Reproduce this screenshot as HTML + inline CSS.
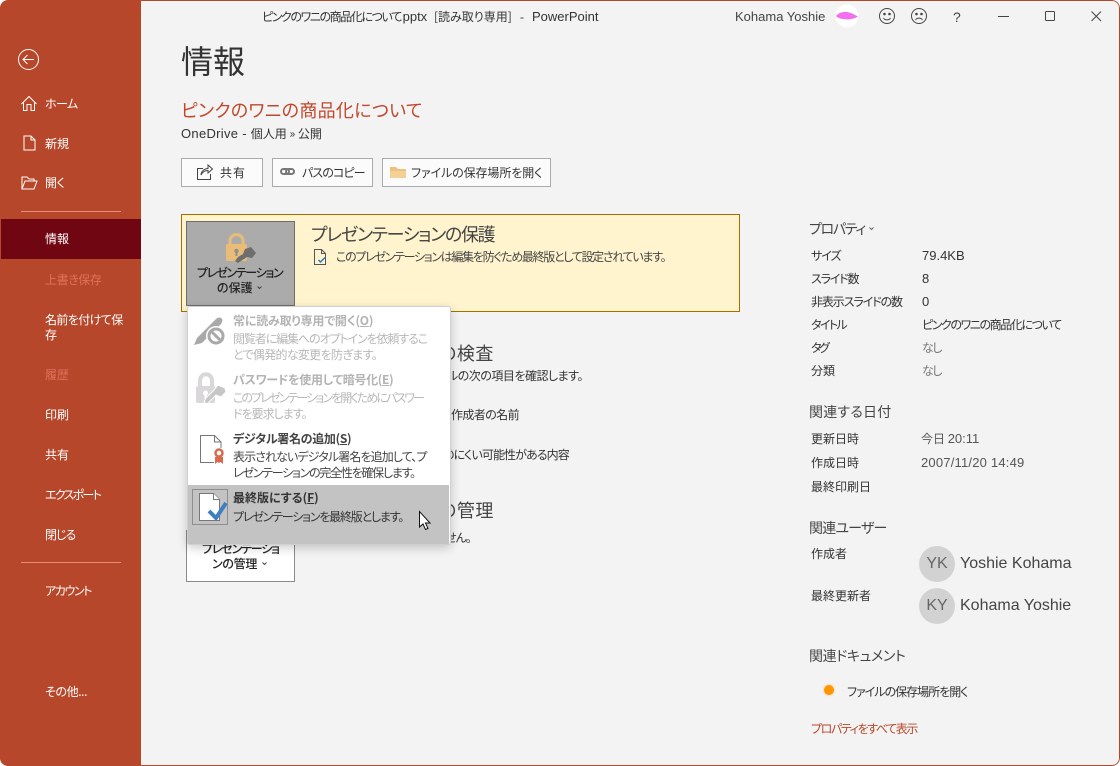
<!DOCTYPE html>
<html lang="ja"><head><meta charset="utf-8"><title>情報</title>
<style>
html,body{margin:0;padding:0;background:#fff}
#w{position:relative;width:1120px;height:766px;overflow:hidden;background:#f3f3f3;border-radius:8px;font-family:"Liberation Sans","Noto Sans CJK JP",sans-serif;color:#333}
.t{position:absolute;white-space:nowrap;font-size:12px;line-height:20px;height:20px;font-family:"Noto Sans CJK JP","Liberation Sans",sans-serif;font-feature-settings:"palt";color:#333}
.l{font-family:"Liberation Sans","Noto Sans CJK JP",sans-serif}
.s{color:#fff}.d{color:#e0705a}
.h{font-size:14px;color:#444}
.b{position:absolute;box-sizing:border-box;border:1px solid #ababab;background:#fbfbfb;top:158px;height:29px}
.a{position:absolute}
svg{position:absolute;overflow:visible}
</style></head><body><div id="w">
<div class="a" style="left:0;top:0;width:1120px;height:766px;box-sizing:border-box;border:1px solid #b7472a;border-radius:8px"></div>
<div class="a" style="left:0;top:0;width:141px;height:766px;background:#b7472a;border-radius:8px 0 0 8px"></div>
<div class="a" style="left:1px;top:219px;width:140px;height:40px;background:#700612"></div>
<div class="a" style="left:21px;top:211px;width:100px;height:1px;background:#e88d78"></div>
<div class="a" style="left:21px;top:562px;width:100px;height:1px;background:#e88d78"></div>

<svg style="left:0;top:0" width="141" height="210" fill="none" stroke="#fff" stroke-width="1">
<circle cx="28.5" cy="59.5" r="10"/><path d="M34 59.5H23M27.5 55L23 59.5L27.5 64"/>
<path d="M21.5 104L29 96.500L36.500 104M23.500 102.500V110.500H27V104.500H31V110.500H34.500V102.500"/>
<path d="M24 136H31L35 140V150H24ZM31 136V140H35"/>
<path d="M22 189V177H27L29 179H34V181M22 189L25 181H37L34 189Z"/>
</svg>
<div class="t s" style="left:45px;top:94px;letter-spacing:-.6px">ホーム</div>
<div class="t s" style="left:45px;top:134px">新規</div>
<div class="t s" style="left:45px;top:173px;letter-spacing:-.3px">開く</div>
<div class="t s" style="left:45px;top:229px">情報</div>
<div class="t d" style="left:45px;top:270px;letter-spacing:-.4px">上書き保存</div>
<div class="t s" style="left:45px;top:310px;letter-spacing:-.6px">名前を付けて保</div>
<div class="t s" style="left:45px;top:325px">存</div>
<div class="t d" style="left:45px;top:365px">履歴</div>
<div class="t s" style="left:45px;top:405px">印刷</div>
<div class="t s" style="left:45px;top:445px">共有</div>
<div class="t s" style="left:45px;top:485px;letter-spacing:-1.7px">エクスポート</div>
<div class="t s" style="left:45px;top:525px;letter-spacing:-1px">閉じる</div>
<div class="t s" style="left:45px;top:581px;letter-spacing:-1.4px">アカウント</div>
<div class="t s" style="left:45px;top:682px;letter-spacing:-.4px">その他...</div>

<div class="t" style="left:262px;top:7px;letter-spacing:-1.4px">ピンクのワニの商品化について</div>
<div class="t l" style="left:399px;top:7px;font-size:13px">.pptx</div>
<div class="t" style="left:434px;top:7px">[読み取り専用]</div>
<div class="t l" style="left:520px;top:7px">-</div>
<div class="t l" style="left:532px;top:7px;font-size:13px">PowerPoint</div>
<div class="t l" style="left:735px;top:7px;color:#444;font-size:13px">Kohama Yoshie</div>
<svg style="left:830px;top:0" width="290" height="32" fill="none" stroke="#444" stroke-width="1">
<circle cx="17" cy="16" r="11.500" fill="#fff" stroke="none"/>
<path d="M6 16C9 12 15 11 19 12.500C22 13 25 15 28 16.500C24 19 18 20 14 19C11 19 8 18 6 16Z" fill="#f46ff0" stroke="none"/>
<circle cx="57" cy="16" r="7.500"/><circle cx="54.500" cy="14" r=".8" fill="#444"/><circle cx="59.500" cy="14" r=".8" fill="#444"/><path d="M53.500 18C55 20.500 59 20.500 60.500 18"/>
<circle cx="89" cy="16" r="7.500"/><circle cx="86.500" cy="14" r=".8" fill="#444"/><circle cx="91.500" cy="14" r=".8" fill="#444"/><path d="M85.500 20C87 17.500 91 17.500 92.500 20"/>
<path d="M168 16.500H179"/><rect x="215.500" y="11.500" width="9" height="9" rx="1"/><path d="M261.500 11.500L271 21M271 11.500L261.500 21"/>
</svg>
<div class="t l" style="left:953px;top:7px;color:#444;font-size:14px">?</div>

<div class="t" style="left:181px;top:39px;font-size:32px;line-height:42px;height:42px;color:#333">情報</div>
<div class="t" style="left:181px;top:98px;font-size:18px;line-height:24px;height:24px;color:#c1482c;letter-spacing:.3px">ピンクのワニの商品化について</div>
<div class="t" style="left:181px;top:124px"><span class="l" style="font-size:13px;letter-spacing:.3px">OneDrive - </span>個人用 » 公開</div>

<div class="b" style="left:181px;width:82px"></div>
<div class="b" style="left:272px;width:101px"></div>
<div class="b" style="left:382px;width:169px"></div>
<svg style="left:196px;top:162px" width="24" height="22" fill="none" stroke="#444" stroke-width="1"><path d="M7 6.500H1.500V17.500H14.500V12"/><path d="M5 13C5 9 9 6.500 12 6.500V3L16.500 7L12 11V8.500C9 8.500 6.500 10 5 13Z"/></svg>
<div class="t" style="left:220px;top:163px;letter-spacing:1px">共有</div>
<svg style="left:279px;top:165px" width="18" height="14" fill="none" stroke="#777" stroke-width="2"><rect x="2" y="4" width="8" height="5" rx="2.500"/><rect x="7" y="4" width="8" height="5" rx="2.500"/></svg>
<div class="t" style="left:302px;top:163px;letter-spacing:-.9px">パスのコピー</div>
<svg style="left:390px;top:165px" width="18" height="14"><path d="M0 2H6L8 4H16V13H0Z" fill="#ecc27c"/><path d="M0 6H16V13H0Z" fill="#f3d096"/></svg>
<div class="t" style="left:411px;top:163px;letter-spacing:-.1px">ファイルの保存場所を開く</div>

<div class="a" style="left:181px;top:214px;width:559px;height:98px;box-sizing:border-box;background:#fff4ce;border:1px solid #a56f00"></div>
<div class="a" style="left:186px;top:221px;width:109px;height:85px;box-sizing:border-box;background:#ababab;border:1px solid #6d6d6d"></div>
<svg style="left:226px;top:233px" width="32" height="32"><path d="M4 12V8C4-.5 17-.5 17 8V12" fill="none" stroke="#e9bd77" stroke-width="3"/><rect x="0" y="11" width="21" height="17" rx="2" fill="#e9bd77"/><circle cx="10.500" cy="18" r="2.200" fill="#8f8f8f"/><rect x="9.500" y="18" width="2" height="5" fill="#8f8f8f"/><path d="M19 16L25 14L30 20L26 25L21 24L12 30L9 28L12 24L17 21Z" fill="#6e6e6e"/></svg>
<div class="t" style="left:197px;top:263px;color:#222;font-weight:500;letter-spacing:-1.3px">プレゼンテーション</div>
<div class="t" style="left:217px;top:278px;color:#222;font-weight:500">の保護</div>
<svg style="left:256px;top:285px" width="8" height="6" fill="none" stroke="#444"><path d="M1.500 1.500L3.500 3.500L5.500 1.500"/></svg>
<div class="t" style="left:311px;top:223px;font-size:18px;line-height:22px;height:22px;color:#444;letter-spacing:-1.3px">プレゼンテーションの保護</div>
<svg style="left:313px;top:248px" width="16" height="18" fill="none" stroke="#555"><path d="M1.500 1.500H8.500L12.500 5.500V16.500H1.500ZM8.500 1.500V5.500H12.500"/><path d="M5.500 12L7.500 14L12 9.500" stroke="#2b7bc0" stroke-width="1.500"/></svg>
<div class="t" style="left:336px;top:247px;color:#444;letter-spacing:-1.3px">このプレゼンテーションは編集を防ぐため最終版として設定されています。</div>

<div class="t" style="left:439px;top:342px;font-size:18px;line-height:22px;height:22px;color:#444;letter-spacing:.5px">の検査</div>
<div class="t" style="left:447px;top:366px;letter-spacing:-.5px">ルの次の項目を確認します。</div>
<div class="t" style="left:451px;top:405px;letter-spacing:-.6px">作成者の名前</div>
<div class="t" style="left:443px;top:445px;letter-spacing:-.9px">のにくい可能性がある内容</div>
<div class="t" style="left:439px;top:499px;font-size:18px;line-height:22px;height:22px;color:#444;letter-spacing:.5px">の管理</div>
<div class="t" style="left:445px;top:528px;letter-spacing:-1px">せん。</div>

<div class="a" style="left:186px;top:530px;width:109px;height:52px;box-sizing:border-box;background:#fff;border:1px solid #8a8a8a"></div>
<div class="t" style="left:202px;top:539px;color:#222;font-weight:500;letter-spacing:-1.2px">プレゼンテーショ</div>
<div class="t" style="left:212px;top:554px;color:#222;font-weight:500;letter-spacing:-.3px">ンの管理</div>
<svg style="left:261px;top:561px" width="8" height="6" fill="none" stroke="#444"><path d="M1.500 1.500L3.500 3.500L5.500 1.500"/></svg>

<div class="a" style="left:187px;top:306px;width:264px;height:239px;box-sizing:border-box;background:#fff;border:1px solid #d0d0d0;border-radius:3px;box-shadow:0 3px 10px rgba(0,0,0,.2)"></div>
<div class="a" style="left:188px;top:485px;width:261px;height:59px;background:#c3c3c3"></div>
<div class="a" style="left:192px;top:489px;width:36px;height:36px;box-sizing:border-box;border:1px solid #8e8e8e"></div>

<svg style="left:190px;top:312px" width="40" height="40"><path d="M4 33L7 26L26 7C28 5 31 5 32 7C33 9 32 10 31 12L12 31Z" fill="#a9a9a9"/><circle cx="26" cy="24" r="10" fill="#fff"/><circle cx="26" cy="24" r="7" fill="none" stroke="#a9a9a9" stroke-width="3"/><path d="M21 19L31 29" stroke="#a9a9a9" stroke-width="3"/></svg>
<svg style="left:194px;top:372px" width="36" height="36"><path d="M6 14V9C6 0 18 0 18 9V14" fill="none" stroke="#d9d7d9" stroke-width="4"/><rect x="2" y="14" width="19" height="17" rx="2" fill="#d9d7d9"/><circle cx="11.500" cy="21" r="2.500" fill="#fff"/><rect x="10.500" y="21" width="2" height="6" fill="#fff"/><path d="M24 13L31 16L32 20L27 25L22 23L13 32L10 30L12 26L20 18Z" fill="#c6c6c6" stroke="#fff"/></svg>
<svg style="left:199px;top:433px" width="30" height="34" fill="none"><path d="M1.500 2.500H15.500L22 9V29.500H1.500Z M15.500 2.500V9H22" stroke="#777"/><rect x="15" y="15" width="12" height="19" fill="#fff" stroke="none"/><circle cx="20" cy="20" r="3.500" stroke="#d8694c" stroke-width="2.500"/><path d="M16 24V31L18.500 29L20 30L21.500 29L24 31V24" fill="#d8694c"/></svg>
<svg style="left:198px;top:493px" width="30" height="32"><path d="M1.500 .5H15.500L21.500 6.500V27.500H1.500Z" fill="#fff" stroke="#777"/><path d="M15.500 .5V6.500H21.500" fill="#fff" stroke="#777"/><path d="M11 18L18 25L28 10" fill="none" stroke="#3f7fc1" stroke-width="4"/></svg>

<div class="t" style="left:233px;top:311px;font-weight:700;color:#b3b3b3;letter-spacing:-.2px">常に読み取り専用で開く(<u>O</u>)</div>
<div class="t" style="left:233px;top:329px;color:#b8b8b8;letter-spacing:-1.1px">閲覧者に編集へのオプトインを依頼するこ</div>
<div class="t" style="left:233px;top:345px;color:#b8b8b8;letter-spacing:-.7px">とで偶発的な変更を防ぎます。</div>
<div class="t" style="left:233px;top:370px;font-weight:700;color:#b3b3b3;letter-spacing:-.3px">パスワードを使用して暗号化(<u>E</u>)</div>
<div class="t" style="left:233px;top:388px;color:#b8b8b8;letter-spacing:-1.9px">このプレゼンテーションを開くためにパスワー</div>
<div class="t" style="left:233px;top:404px;color:#b8b8b8;letter-spacing:-1px">ドを要求します。</div>
<div class="t" style="left:233px;top:429px;font-weight:700;color:#444;letter-spacing:-.3px">デジタル署名の追加(<u>S</u>)</div>
<div class="t" style="left:233px;top:447px;color:#444;letter-spacing:-.9px">表示されないデジタル署名を追加して、プ</div>
<div class="t" style="left:233px;top:463px;color:#444;letter-spacing:-1.25px">レゼンテーションの完全性を確保します。</div>
<div class="t" style="left:233px;top:488px;font-weight:700;color:#333">最終版にする(<u>F</u>)</div>
<div class="t" style="left:233px;top:507px;color:#333;letter-spacing:-1.2px">プレゼンテーションを最終版とします。</div>
<svg style="left:419px;top:511px" width="14" height="20"><path d="M.5 .5V16L4 13L6.500 18.500L9 17.500L6.500 12H11Z" fill="#fff" stroke="#111"/></svg>

<div class="t h" style="left:809px;top:219px;letter-spacing:-1.3px">プロパティ</div>
<svg style="left:868px;top:226px" width="8" height="6" fill="none" stroke="#666"><path d="M1.500 1.500L3.500 3.500L5.500 1.500"/></svg>
<div class="t" style="left:811px;top:246px;letter-spacing:-1px">サイズ</div><div class="t l" style="left:922px;top:246px;font-size:13px">79.4KB</div>
<div class="t" style="left:811px;top:269px;letter-spacing:-1.2px">スライド数</div><div class="t l" style="left:922px;top:269px;font-size:13px">8</div>
<div class="t" style="left:811px;top:292px;letter-spacing:-1.1px">非表示スライドの数</div><div class="t l" style="left:922px;top:292px;font-size:13px">0</div>
<div class="t" style="left:811px;top:315px;letter-spacing:-1.6px">タイトル</div><div class="t" style="left:922px;top:315px;letter-spacing:-1.4px">ピンクのワニの商品化について</div>
<div class="t" style="left:811px;top:338px;letter-spacing:-2.5px">タグ</div><div class="t" style="left:922px;top:338px;color:#777;letter-spacing:-1.5px">なし</div>
<div class="t" style="left:811px;top:361px">分類</div><div class="t" style="left:922px;top:361px;color:#777;letter-spacing:-1.5px">なし</div>
<div class="t h" style="left:809px;top:402px;letter-spacing:.2px">関連する日付</div>
<div class="t" style="left:811px;top:429px">更新日時</div><div class="t" style="left:921px;top:429px;color:#555">今日 <span class="l" style="font-size:13px">20:11</span></div>
<div class="t" style="left:811px;top:453px">作成日時</div><div class="t l" style="left:921px;top:453px;color:#555;font-size:13px;letter-spacing:.2px">2007/11/20 14:49</div>
<div class="t" style="left:811px;top:477px">最終印刷日</div>
<div class="t h" style="left:809px;top:518px;letter-spacing:-.8px">関連ユーザー</div>
<div class="t" style="left:811px;top:544px">作成者</div>
<div class="t" style="left:811px;top:586px">最終更新者</div>
<div class="a" style="left:919px;top:546px;width:36px;height:36px;border-radius:50%;background:#d2d2d2"></div>
<div class="a" style="left:919px;top:588px;width:36px;height:36px;border-radius:50%;background:#d2d2d2"></div>
<div class="t l" style="left:919px;width:36px;text-align:center;top:554px;font-size:16px;color:#666">YK</div>
<div class="t l" style="left:919px;width:36px;text-align:center;top:596px;font-size:16px;color:#666">KY</div>
<div class="t l" style="left:960px;top:554px;font-size:16px;color:#444">Yoshie Kohama</div>
<div class="t l" style="left:960px;top:596px;font-size:16px;color:#444">Kohama Yoshie</div>
<div class="t h" style="left:809px;top:646px;letter-spacing:-.4px">関連ドキュメント</div>
<div class="a" style="left:824px;top:685px;width:10px;height:10px;border-radius:50%;background:#ff9500;box-shadow:0 0 2px #ffb860"></div>
<div class="t" style="left:847px;top:682px;letter-spacing:-1px">ファイルの保存場所を開く</div>
<div class="t" style="left:811px;top:719px;color:#b7472a;letter-spacing:-1.4px">プロパティをすべて表示</div>
</div></body></html>
